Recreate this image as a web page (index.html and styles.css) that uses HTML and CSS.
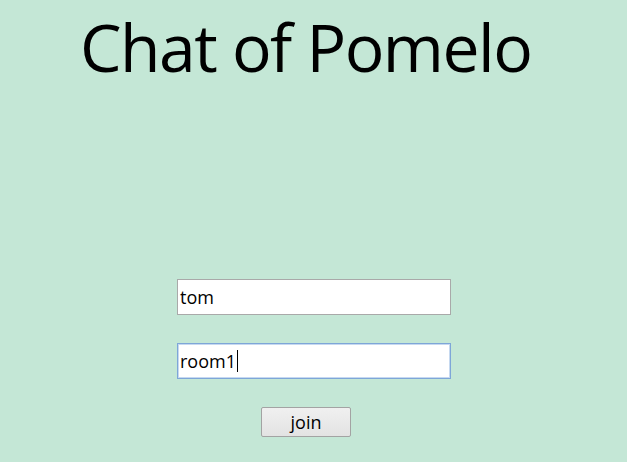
FILE: index.html
```html
<!DOCTYPE html>
<html>
<head>
<meta charset="utf-8">
<link rel="stylesheet" href="styles.css">
</head>
<body>
<div class="page">
  <h1 class="title">Chat of Pomelo</h1>
  <div class="form">
    <div class="field">tom</div>
    <div class="field focused">room1<span class="caret"></span></div>
    <div class="btn">join</div>
  </div>
</div>
</body>
</html>
```
FILE: styles.css
```css
html, body {
  margin: 0;
  padding: 0;
  background: #c4e7d6;
}
.page {
  width: 627px;
  height: 462px;
  font-family: "Open Sans", "Noto Sans", sans-serif;
  color: #000;
}
.title {
  margin: 0;
  padding-top: 6px;
  padding-left: 80px;
  font-weight: 400;
  font-size: 66px;
  line-height: 80px;
  letter-spacing: -1.5px;
  white-space: nowrap;
}
.form {
  margin-top: 193px;
  display: flex;
  flex-direction: column;
  align-items: flex-start;
  padding-left: 177px;
}
.field {
  box-sizing: border-box;
  width: 274px;
  height: 36px;
  background: #fff;
  border: 1px solid #a9a9a9;
  font-size: 18px;
  line-height: 34px;
  padding-left: 2px;
  display: flex;
  align-items: center;
  margin-bottom: 28px;
}
.field.focused {
  border-color: #7ea6d8;
  box-shadow: 0 0 0 1px #c6d9f0 inset;
}
.caret {
  display: inline-block;
  width: 1px;
  height: 22px;
  background: #000;
  margin-left: 1px;
}
.btn {
  box-sizing: border-box;
  margin-left: 84px;
  width: 90px;
  height: 30px;
  border: 1px solid #a3a3a3;
  border-radius: 2px;
  background: linear-gradient(#f0f0f0, #e3e3e3);
  font-size: 18px;
  line-height: 28px;
  text-align: center;
}
```
